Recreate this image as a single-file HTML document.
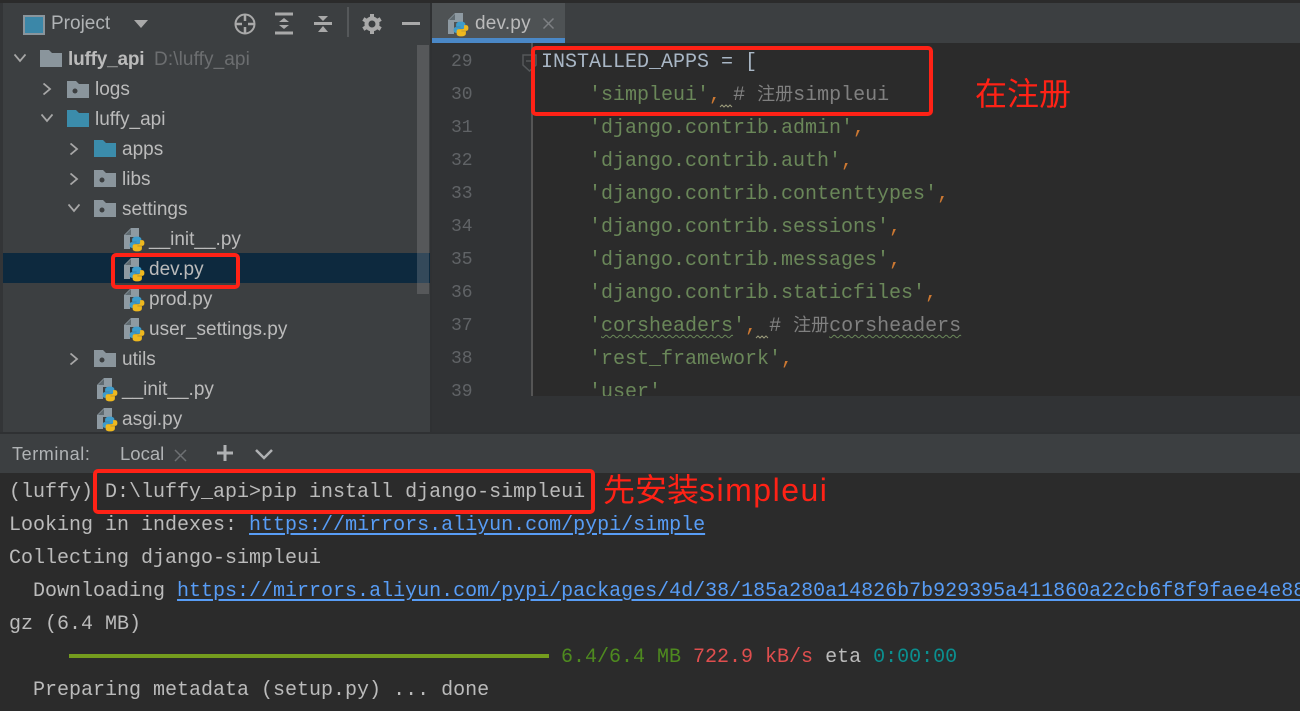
<!DOCTYPE html>
<html><head><meta charset="utf-8">
<style>
html,body{margin:0;padding:0;background:#2b2b2b}
#p{position:relative;width:1300px;height:711px;overflow:hidden;background:#3c3f41;font-family:"Liberation Sans","Noto Sans CJK SC",sans-serif}
.b{position:absolute}
.t{position:absolute;white-space:pre;font-size:19px;line-height:30px;height:30px;color:#bbbbbb}
.m{position:absolute;white-space:pre;font-family:"Liberation Mono","Noto Sans CJK SC",monospace;font-size:20px;line-height:33px;height:33px;color:#a9b7c6}
.n{position:absolute;left:451px;font-family:"Liberation Mono",monospace;font-size:18px;line-height:33px;height:33px;color:#606366}
.s{color:#6a8759}.o{color:#cc7832}.c{color:#808080}
.j{font-size:18px;line-height:18px}
.w{text-decoration:underline wavy #6a8759 1px;text-underline-offset:3px}
.l{color:#589df6;text-decoration:underline;text-underline-offset:3px}
.r{position:absolute;box-sizing:border-box;border:4px solid #ff2216;border-radius:5px}
.a{position:absolute;white-space:pre;color:#ff2216;font-size:32px;line-height:40px}
svg{position:absolute;overflow:visible}
</style></head><body><div id="p">
<svg width="0" height="0" style="left:0;top:0">
<defs>
<symbol id="py" viewBox="0 0 20 23" overflow="visible">
<path d="M0 7 7 0h8v9H6v12H0z" fill="#8e9aa2"/>
<path d="M1 7 7 1v6z" fill="#5f6a70"/>
<path d="M13 9c-3 0-4.500 1-4.500 2.500V13.500H13V14.500H8C6.500 14.500 6 15.500 6 17C6 18.500 6.700 19.500 8 19.500H9.500V17.500C9.500 16.300 10.500 15.500 11.500 15.500H15C16.200 15.500 17 14.700 17 13.500V11.500C17 10 15.500 9 13 9z" fill="#3e9ccb" stroke="#3e9ccb" stroke-width=".8"/>
<path d="M13 23c3 0 4.500-1 4.500-2.500V18.500H13V17.500H18C19.500 17.500 20 16.500 20 15C20 13.500 19.300 12.500 18 12.500H16.500V14.500C16.500 15.700 15.500 16.500 14.500 16.500H11C9.800 16.500 9 17.300 9 18.500V20.500C9 22 10.500 23 13 23z" fill="#eeb81f" stroke="#eeb81f" stroke-width=".8"/>
</symbol>
<symbol id="fd" viewBox="0 0 22 17"><path d="M0 0h9l3 3h10v14H0z" fill="#8a959c"/><circle cx="8" cy="10" r="2.500" fill="#3c3f41"/></symbol>
<symbol id="fb" viewBox="0 0 22 17"><path d="M0 0h9l3 3h10v14H0z" fill="#3b8cab"/></symbol>
<symbol id="fg" viewBox="0 0 22 17"><path d="M0 0h9l3 3h10v14H0z" fill="#8a959c"/></symbol>
<symbol id="cr" viewBox="0 0 12 12"><path d="M2.500 .5l6.500 5.500-6.500 5.500" fill="none" stroke="#a7a7a7" stroke-width="1.800"/></symbol>
<symbol id="cd" viewBox="0 0 12 12"><path d="M.5 2.500l5.500 6.500 5.500-6.500" fill="none" stroke="#a7a7a7" stroke-width="1.800"/></symbol>
</defs></svg>

<div class="b" style="left:0;top:0;width:1300px;height:3px;background:#2b2b2b"></div>
<div class="b" style="left:0;top:3px;width:3px;height:430px;background:#333537"></div>

<!-- Toolbar -->
<div class="b" style="left:23px;top:15px;width:18px;height:16px;border:2px solid #8a959c;background:#3b87a8"></div>
<div class="t" style="left:51px;top:9px;font-size:19px;color:#b0b3b5">Project</div>
<svg style="left:134px;top:20px" width="14" height="9"><path d="M0 0h14L7 8z" fill="#a9a9a9"/></svg>
<svg style="left:234px;top:13px" width="22" height="22" viewBox="0 0 22 22"><circle cx="11" cy="11" r="9.500" fill="none" stroke="#a9a9a9" stroke-width="2"/><path d="M11 2v6M11 14v6M2 11h6M14 11h6" stroke="#a9a9a9" stroke-width="2.500"/></svg>
<svg style="left:275px;top:12px" width="19" height="23" viewBox="0 0 19 23"><path d="M0 2h18M0 21h18" stroke="#a9a9a9" stroke-width="3"/><path d="M9 6l5 4H4zM9 17l5-4H4z" fill="#a9a9a9"/></svg>
<svg style="left:314px;top:13px" width="19" height="23" viewBox="0 0 19 23"><path d="M0 10.500h18" stroke="#a9a9a9" stroke-width="3"/><path d="M9 8l5-5H4zM9 13l5 6H4z" fill="#a9a9a9"/></svg>
<div class="b" style="left:347px;top:7px;width:2px;height:30px;background:#55585a"></div>
<svg style="left:362px;top:14px" width="20" height="20" viewBox="0 0 20 20"><circle cx="10" cy="10" r="5.500" fill="none" stroke="#a9a9a9" stroke-width="4"/><path d="M10 0v4M10 16v4M1.300 5l3.400 2M15.300 13l3.400 2M1.300 15l3.400-2M15.300 7l3.400-2" stroke="#a9a9a9" stroke-width="4"/></svg>
<div class="b" style="left:402px;top:22px;width:18px;height:3px;background:#a9a9a9"></div>

<!-- Scrollbar + selection -->
<div class="b" style="left:3px;top:253px;width:427px;height:30px;background:#0d293e"></div>
<div class="b" style="left:417px;top:45px;width:12px;height:249px;background:#595b5d;opacity:.9"></div>
<div class="b" style="left:417px;top:253px;width:12px;height:30px;background:#34495a"></div>

<!-- Tree -->
<svg style="left:14px;top:52px" width="12" height="12"><use href="#cd"/></svg>
<svg style="left:40px;top:50px" width="22" height="17"><use href="#fg"/></svg>
<div class="t" style="left:68px;top:45px;font-weight:bold;letter-spacing:-.2px;color:#bbbbbb">luffy_api</div>
<div class="t" style="left:154px;top:45px;color:#6c6e70;letter-spacing:.1px">D:\luffy_api</div>

<svg style="left:41px;top:83px" width="12" height="12"><use href="#cr"/></svg>
<svg style="left:67px;top:81px" width="22" height="17"><use href="#fd"/></svg>
<div class="t" style="left:95px;top:75px">logs</div>

<svg style="left:41px;top:112px" width="12" height="12"><use href="#cd"/></svg>
<svg style="left:67px;top:110px" width="22" height="17"><use href="#fb"/></svg>
<div class="t" style="left:95px;top:105px">luffy_api</div>

<svg style="left:68px;top:143px" width="12" height="12"><use href="#cr"/></svg>
<svg style="left:94px;top:140px" width="22" height="17"><use href="#fb"/></svg>
<div class="t" style="left:122px;top:135px">apps</div>

<svg style="left:68px;top:173px" width="12" height="12"><use href="#cr"/></svg>
<svg style="left:94px;top:170px" width="22" height="17"><use href="#fd"/></svg>
<div class="t" style="left:122px;top:165px">libs</div>

<svg style="left:68px;top:202px" width="12" height="12"><use href="#cd"/></svg>
<svg style="left:94px;top:200px" width="22" height="17"><use href="#fd"/></svg>
<div class="t" style="left:122px;top:195px">settings</div>

<svg style="left:124px;top:228px" width="20" height="23"><use href="#py"/></svg>
<div class="t" style="left:149px;top:225px">__init__.py</div>
<svg style="left:124px;top:258px" width="20" height="23"><use href="#py"/></svg>
<div class="t" style="left:149px;top:255px">dev.py</div>
<svg style="left:124px;top:288px" width="20" height="23"><use href="#py"/></svg>
<div class="t" style="left:149px;top:285px">prod.py</div>
<svg style="left:124px;top:318px" width="20" height="23"><use href="#py"/></svg>
<div class="t" style="left:149px;top:315px">user_settings.py</div>

<svg style="left:68px;top:353px" width="12" height="12"><use href="#cr"/></svg>
<svg style="left:94px;top:350px" width="22" height="17"><use href="#fd"/></svg>
<div class="t" style="left:122px;top:345px">utils</div>

<svg style="left:97px;top:378px" width="20" height="23"><use href="#py"/></svg>
<div class="t" style="left:122px;top:375px">__init__.py</div>
<svg style="left:97px;top:408px" width="20" height="23"><use href="#py"/></svg>
<div class="t" style="left:122px;top:405px">asgi.py</div>

<!-- Tabs -->
<div class="b" style="left:430px;top:3px;width:2px;height:430px;background:#2f3133"></div>
<div class="b" style="left:432px;top:3px;width:868px;height:40px;background:#3c3f41"></div>
<div class="b" style="left:432px;top:3px;width:133px;height:36px;background:#4e5254"></div>
<div class="b" style="left:432px;top:38px;width:133px;height:5px;background:#4a88c7"></div>
<svg style="left:448px;top:13px" width="20" height="23"><use href="#py"/></svg>
<div class="t" style="left:475px;top:9px;color:#bbbbbb;letter-spacing:.2px">dev.py</div>
<svg style="left:543px;top:18px" width="11" height="11"><path d="M.5 .5l10 10M10.500 .5l-10 10" stroke="#7d8083" stroke-width="1.500"/></svg>

<!-- Editor -->
<div class="b" style="left:432px;top:43px;width:868px;height:353px;background:#2b2b2b"></div>
<div class="b" style="left:432px;top:43px;width:99px;height:353px;background:#313335"></div>
<div class="b" style="left:531px;top:43px;width:2px;height:353px;background:#555555"></div>
<svg style="left:522px;top:54px" width="16" height="18" viewBox="0 0 16 18"><path d="M1 1h13v10l-6.500 6L1 11z" fill="none" stroke="#55585a" stroke-width="1.500"/><path d="M4 7h7" stroke="#55585a" stroke-width="1.500"/></svg>

<div class="n" style="top:46px">29</div><div class="n" style="top:79px">30</div><div class="n" style="top:112px">31</div><div class="n" style="top:145px">32</div><div class="n" style="top:178px">33</div><div class="n" style="top:211px">34</div><div class="n" style="top:244px">35</div><div class="n" style="top:277px">36</div><div class="n" style="top:310px">37</div><div class="n" style="top:343px">38</div>
<div class="b" style="left:432px;top:376px;width:868px;height:20px;overflow:hidden">
<div class="n" style="left:19px;top:0">39</div>
<div class="m" style="left:157px;top:0"><span class="s">'user'</span></div>
</div>

<div class="m" style="left:541px;top:46px">INSTALLED_APPS = [</div>
<div class="m" style="left:589px;top:79px"><span class="s">'simpleui'</span><span class="o">,</span> <span class="c"># <span class="j">注册</span>simpleui</span></div>
<div class="m" style="left:589px;top:112px"><span class="s">'django.contrib.admin'</span><span class="o">,</span></div>
<div class="m" style="left:589px;top:145px"><span class="s">'django.contrib.auth'</span><span class="o">,</span></div>
<div class="m" style="left:589px;top:178px"><span class="s">'django.contrib.contenttypes'</span><span class="o">,</span></div>
<div class="m" style="left:589px;top:211px"><span class="s">'django.contrib.sessions'</span><span class="o">,</span></div>
<div class="m" style="left:589px;top:244px"><span class="s">'django.contrib.messages'</span><span class="o">,</span></div>
<div class="m" style="left:589px;top:277px"><span class="s">'django.contrib.staticfiles'</span><span class="o">,</span></div>
<div class="m" style="left:589px;top:310px"><span class="s">'<span class="w">corsheaders</span>'</span><span class="o">,</span> <span class="c"># <span class="j">注册</span><span class="w">corsheaders</span></span></div>
<div class="m" style="left:589px;top:343px"><span class="s">'rest_framework'</span><span class="o">,</span></div>
<svg style="left:720px;top:104px" width="13" height="4"><path d="M0 3l2-2 2 2 2-2 2 2 2-2 2 2" fill="none" stroke="#9a9a7a" stroke-width="1"/></svg>
<svg style="left:756px;top:335px" width="13" height="4"><path d="M0 3l2-2 2 2 2-2 2 2 2-2 2 2" fill="none" stroke="#9a9a7a" stroke-width="1"/></svg>

<div class="b" style="left:432px;top:396px;width:868px;height:36px;background:#313335"></div>
<div class="b" style="left:0;top:432px;width:1300px;height:2px;background:#2f3133"></div>

<!-- Terminal header -->
<div class="b" style="left:0;top:434px;width:1300px;height:39px;background:#3c3f41"></div>
<div class="t" style="left:12px;top:439px;font-size:18px;letter-spacing:.6px;color:#b0b3b5">Terminal:</div>
<div class="t" style="left:120px;top:439px;font-size:18.500px;color:#b0b3b5">Local</div>
<svg style="left:174px;top:449px" width="13" height="13"><path d="M1 1l11 11M12 1L1 12" stroke="#6d7073" stroke-width="1.500"/></svg>
<svg style="left:217px;top:445px" width="16" height="16"><path d="M8 0v16M0 8h16" stroke="#afb1b3" stroke-width="3"/></svg>
<svg style="left:255px;top:449px" width="18" height="11"><path d="M1 1l8 8 8-8" fill="none" stroke="#afb1b3" stroke-width="2.500"/></svg>

<!-- Terminal -->
<div class="b" style="left:0;top:473px;width:1300px;height:238px;background:#2b2b2b"></div>
<div class="m" style="left:9px;top:476px;color:#bbbbbb">(luffy) D:\luffy_api&gt;pip install django-simpleui</div>
<div class="m" style="left:9px;top:509px;color:#bbbbbb">Looking in indexes: <span class="l">https://mirrors.aliyun.com/pypi/simple</span></div>
<div class="m" style="left:9px;top:542px;color:#bbbbbb">Collecting django-simpleui</div>
<div class="m" style="left:9px;top:575px;color:#bbbbbb">  Downloading <span class="l">https://mirrors.aliyun.com/pypi/packages/4d/38/185a280a14826b7b929395a411860a22cb6f8f9faee4e88</span></div>
<div class="m" style="left:9px;top:608px;color:#bbbbbb">gz (6.4 MB)</div>
<div class="b" style="left:69px;top:654px;width:480px;height:4px;background:#749c1e"></div>
<div class="m" style="left:561px;top:641px;color:#4e8a1f">6.4/6.4 MB <span style="color:#e04e4e">722.9 kB/s</span> <span style="color:#bbbbbb">eta</span> <span style="color:#0b8f8f">0:00:00</span></div>
<div class="m" style="left:9px;top:674px;color:#bbbbbb">  Preparing metadata (setup.py) ... done</div>

<!-- Annotations -->
<div class="r" style="left:531px;top:46px;width:402px;height:70px"></div>
<div class="r" style="left:111px;top:253px;width:129px;height:36px"></div>
<div class="r" style="left:93px;top:469px;width:502px;height:45px"></div>
<div class="a" style="left:975px;top:74px">在注册</div>
<div class="a" style="left:603px;top:470px">先安装<span style="letter-spacing:1.500px">simpleui</span></div>
</div></body></html>
